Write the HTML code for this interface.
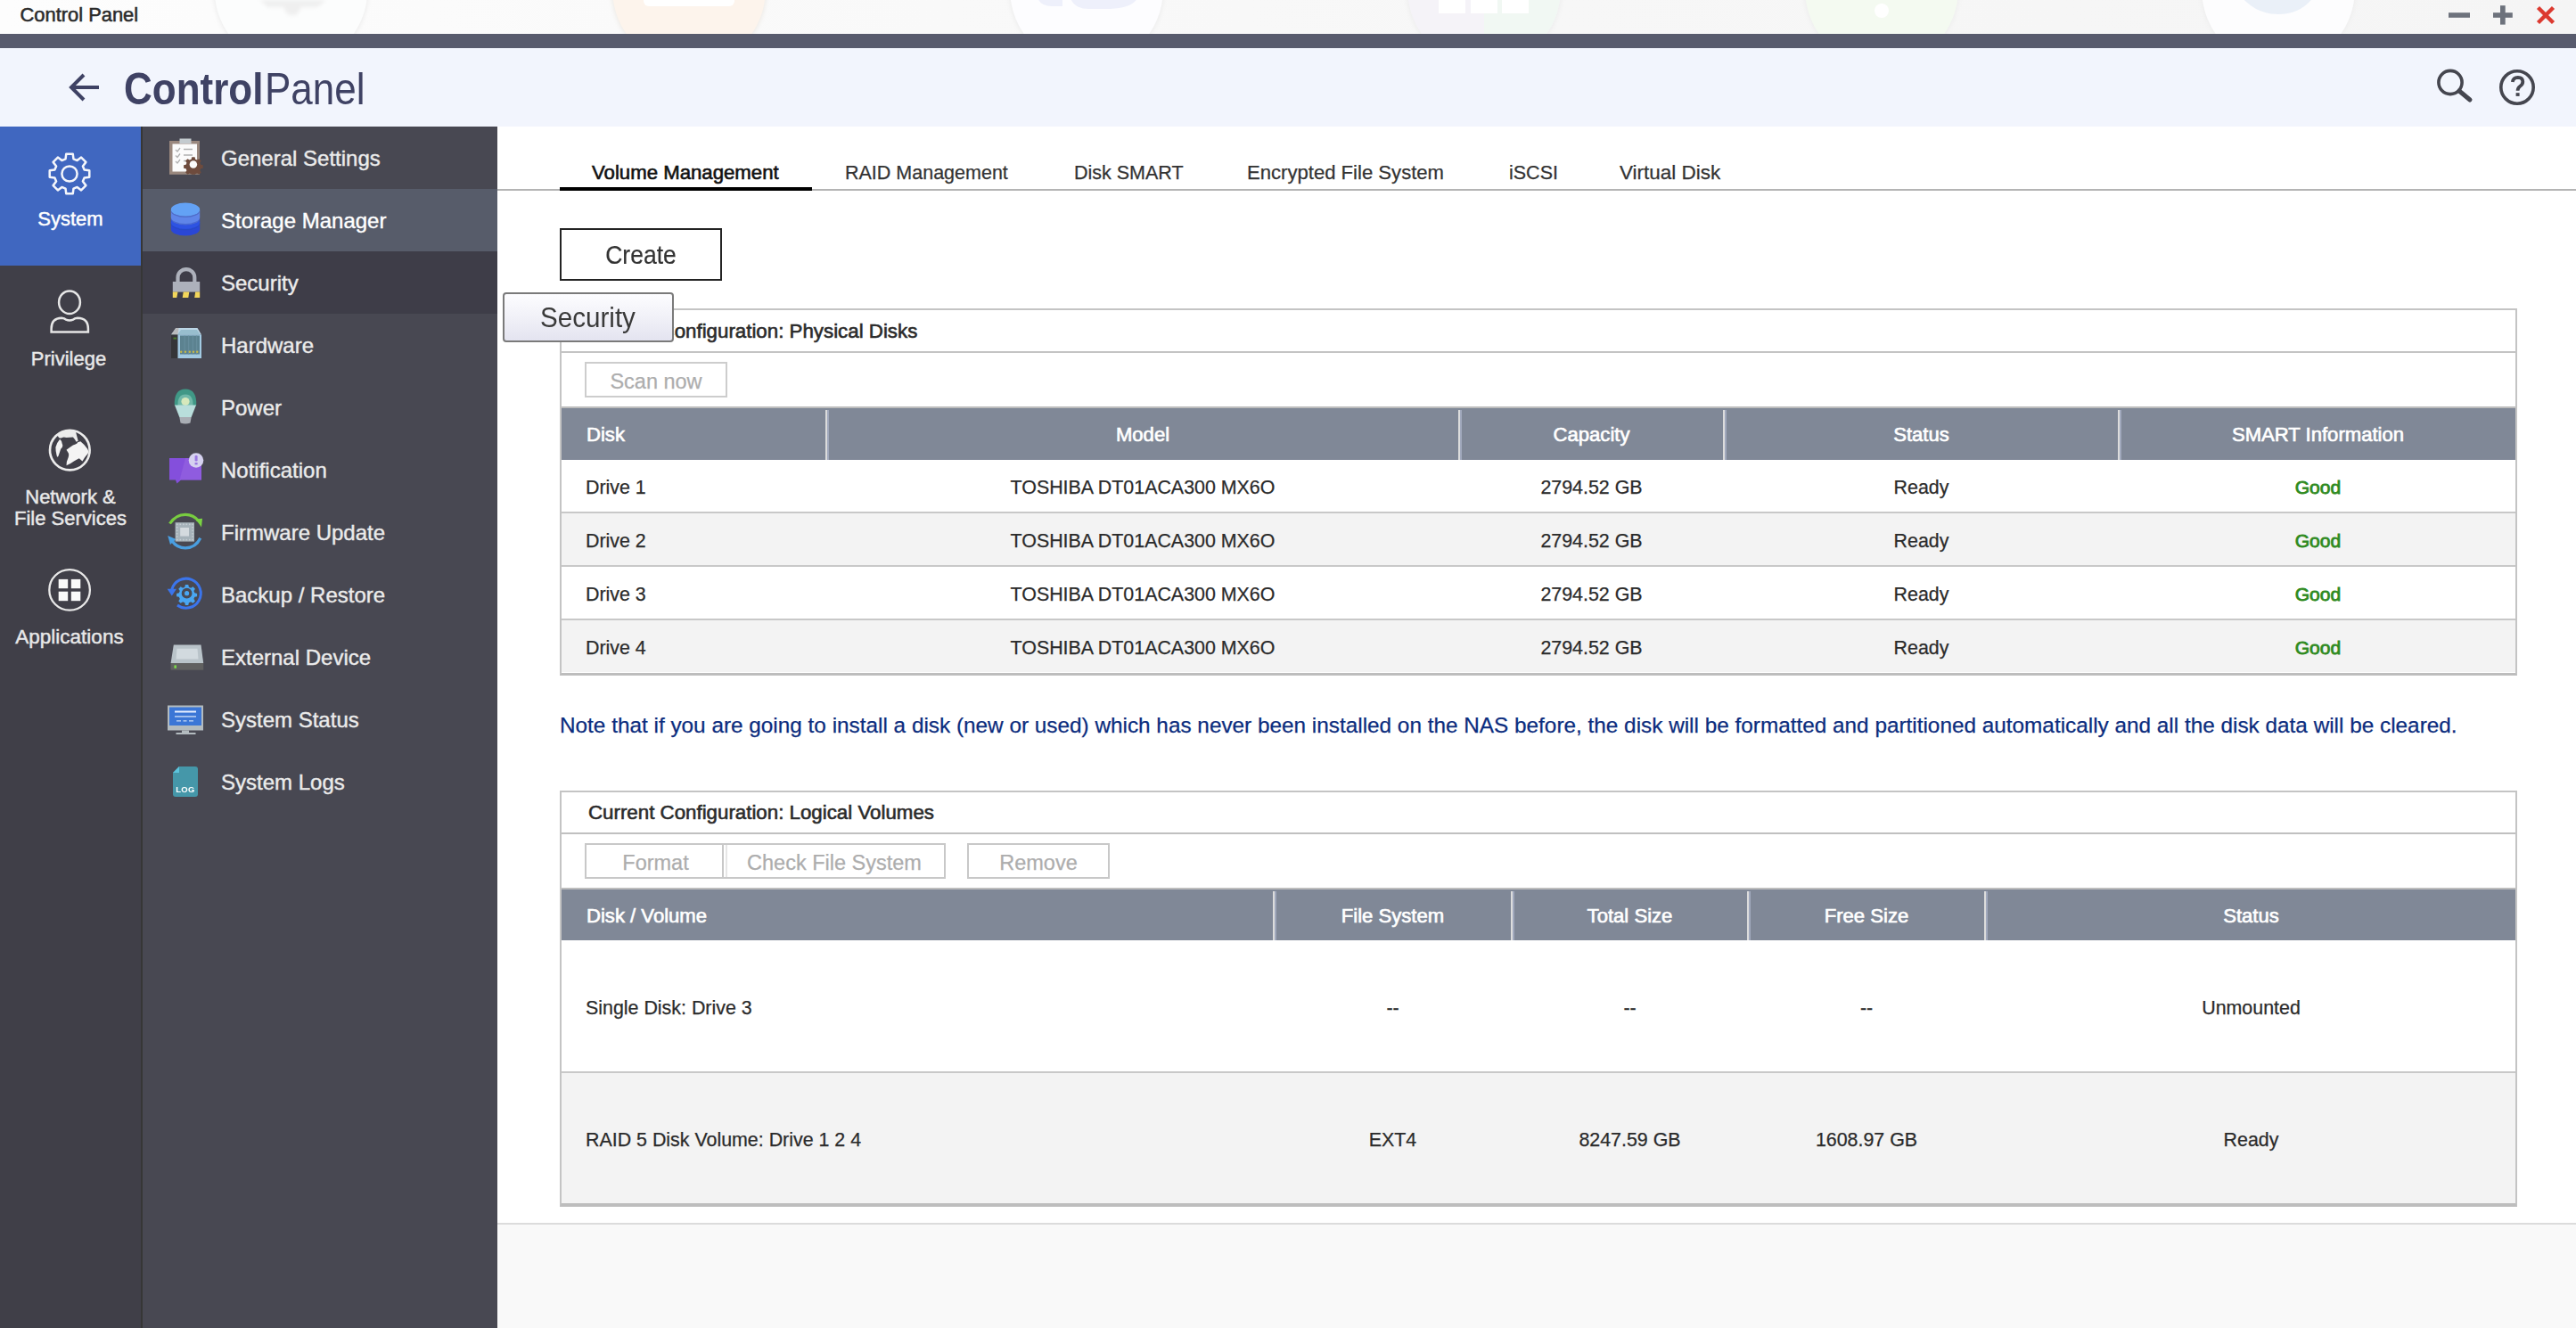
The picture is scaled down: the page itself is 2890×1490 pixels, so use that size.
<!DOCTYPE html>
<html><head><meta charset="utf-8">
<style>
*{box-sizing:border-box;margin:0;padding:0}
html,body{width:2890px;height:1490px;overflow:hidden;background:#fff;font-family:"Liberation Sans",sans-serif;position:relative}
.a{position:absolute}
.t{position:absolute;line-height:1;white-space:nowrap}
.c{text-align:center}
</style></head><body>

<!-- title bar -->
<div class="a" style="left:0;top:0;width:2890px;height:38px;background:linear-gradient(90deg,#fdfdfd 0%,#fafafa 25%,#f7f7f7 60%,#f5f5f5 100%);overflow:hidden" id="titlebar"></div>
<svg class="a" style="left:0;top:0" width="2890" height="38" viewBox="0 0 2890 38">
 <defs>
  <filter id="sh" x="-20%" y="-20%" width="140%" height="140%"><feGaussianBlur stdDeviation="2"/></filter>
 </defs>
 <g>
  <circle cx="326.5" cy="-11" r="87.5" fill="#efefef" filter="url(#sh)"/>
  <circle cx="326.5" cy="-11" r="85.7" fill="#fcfdfd"/>
  <path d="M292 0 L300 8 L318 8 L323 17 L333 17 L338 8 L356 8 L366 0 Z" fill="#efefef" filter="url(#sh)"/>
  <circle cx="773" cy="-11" r="87.5" fill="#f0ede9" filter="url(#sh)"/>
  <circle cx="773" cy="-11" r="85.7" fill="#fdf4ec"/>
  <rect x="722" y="-10" width="102" height="17" rx="6" fill="#ffffff"/>
  <circle cx="1219" cy="-11" r="87.5" fill="#efefef" filter="url(#sh)"/>
  <circle cx="1219" cy="-11" r="85.7" fill="#fdfdff"/>
  <path d="M1163 -10 Q1163 7 1180 7 H1192 V-10 Z M1200 -10 Q1200 10 1222 10 H1240 Q1278 10 1278 -10 Z" fill="#eef0fb"/>
  <circle cx="1665" cy="-11" r="87.5" fill="#efefef" filter="url(#sh)"/>
  <circle cx="1665" cy="-11" r="85.7" fill="#f5f3f8"/>
  <path d="M1665 74.7 A85.7 85.7 0 0 0 1750.7 -11 H1665 Z" fill="#f1f8f3"/>
  <rect x="1614" y="-10" width="30" height="25" fill="#fff"/>
  <rect x="1650" y="-10" width="30" height="25" fill="#fff"/>
  <rect x="1685" y="-10" width="30" height="25" fill="#fff"/>
  <circle cx="2111" cy="-11" r="87.5" fill="#efefef" filter="url(#sh)"/>
  <circle cx="2111" cy="-11" r="85.7" fill="#f4faf1"/>
  <circle cx="2111" cy="12" r="8" fill="#ffffff"/>
  <circle cx="2556" cy="-11" r="87.5" fill="#efefef" filter="url(#sh)"/>
  <circle cx="2556" cy="-11" r="85.7" fill="#fdfdfe"/>
  <path d="M2507 -10 L2520 2 Q2535 16 2556 16 Q2585 16 2600 -10 Z" fill="#eaf0f8"/>
 </g>
 <g fill="#6d727c">
  <rect x="2747" y="14.2" width="24" height="5.6"/>
  <rect x="2797" y="14.2" width="21.8" height="5.6"/>
  <rect x="2805" y="6.2" width="5.7" height="21.4"/>
 </g>
 <path d="M2847.5 8.5 L2864.5 25.5 M2864.5 8.5 L2847.5 25.5" stroke="#dc3a30" stroke-width="4.4"/>
</svg>
<div class="t" style="left:22.5px;top:5.5px;font-size:21.9px;color:#2b2b2b;-webkit-text-stroke:0.55px currentColor">Control Panel</div>

<!-- dark band -->
<div class="a" style="left:0;top:38px;width:2890px;height:16px;background:#585b6d"></div>

<!-- header -->
<div class="a" style="left:0;top:54px;width:2890px;height:88px;background:#f2f5fd"></div>

<!-- left sidebar -->
<div class="a" style="left:0;top:142px;width:158px;height:1348px;background:#403f48"></div>
<div class="a" style="left:0;top:142px;width:158px;height:156px;background:#4067c0"></div>
<div class="a" style="left:158px;top:142px;width:2px;height:1348px;background:#363636"></div>

<!-- second sidebar -->
<div class="a" style="left:160px;top:142px;width:398px;height:1348px;background:#484852"></div>
<div class="a" style="left:160px;top:212px;width:398px;height:70px;background:#575c6a"></div>
<div class="a" style="left:160px;top:282px;width:398px;height:70px;background:#3e3d48"></div>

<!-- header content -->
<svg class="a" style="left:74px;top:78px" width="42" height="40" viewBox="0 0 42 40">
 <path d="M37 20 H7 M20 6 L6 20 L20 34" fill="none" stroke="#3f4264" stroke-width="4" stroke-linecap="butt" stroke-linejoin="miter"/>
</svg>
<div class="t" style="left:139px;top:79.5px;font-size:44px;font-weight:bold;color:#3f4264;transform:scaleY(1.14);transform-origin:0 37px">Control</div>
<div class="t" style="left:297px;top:79.5px;font-size:44px;color:#3f4264;transform:scaleY(1.14);transform-origin:0 37px">Panel</div>
<svg class="a" style="left:2728px;top:74px" width="50" height="46" viewBox="0 0 50 46">
 <circle cx="21" cy="18.5" r="13.1" fill="none" stroke="#45464f" stroke-width="3.6"/>
 <path d="M31 28 L43 38" stroke="#45464f" stroke-width="5" stroke-linecap="round"/>
</svg>
<svg class="a" style="left:2800px;top:74px" width="48" height="48" viewBox="0 0 48 48">
 <circle cx="24" cy="24" r="18.2" fill="none" stroke="#45464f" stroke-width="3.6"/>
 <path d="M18.8 18 Q19.5 12.8 24.8 12.8 Q30.3 13 30.3 17.8 Q30.3 20.8 27 23 Q24.6 24.8 24.6 27.8" fill="none" stroke="#45464f" stroke-width="3.8"/>
 <rect x="22.6" y="30.2" width="4" height="3.7" fill="#45464f"/>
</svg>

<!-- left sidebar content -->
<svg class="a" style="left:54px;top:171px" width="48" height="48" viewBox="0 0 48 48">
 <g fill="none" stroke="#f4f6fb" stroke-width="2.5" stroke-linejoin="round">
 <path d="M19.55 7.39 L20.27 1.71 L27.73 1.71 L28.45 7.39 L32.60 9.10 L37.12 5.60 L42.40 10.88 L38.90 15.40 L40.61 19.55 L46.29 20.27 L46.29 27.73 L40.61 28.45 L38.90 32.60 L42.40 37.12 L37.12 42.40 L32.60 38.90 L28.45 40.61 L27.73 46.29 L20.27 46.29 L19.55 40.61 L15.40 38.90 L10.88 42.40 L5.60 37.12 L9.10 32.60 L7.39 28.45 L1.71 27.73 L1.71 20.27 L7.39 19.55 L9.10 15.40 L5.60 10.88 L10.88 5.60 L15.40 9.10 Z"/>
 <circle cx="24" cy="24" r="8.6"/>
 </g>
</svg>
<div class="t c" style="-webkit-text-stroke:0.45px currentColor;left:0;top:235px;width:158px;font-size:22px;color:#fff">System</div>

<svg class="a" style="left:54px;top:322px" width="50" height="56" viewBox="0 0 50 56">
 <g fill="none" stroke="#e6e6e6" stroke-width="2.5">
 <ellipse cx="24" cy="17.2" rx="11.9" ry="12.8"/>
 <path d="M3.6 50.6 V47 Q3.6 35 15 34.8 Q18.5 35 20 36.6 Q24 38.2 28 36.6 Q29.5 35 33 34.8 Q44.9 35 44.9 47 V50.6 Z"/>
 </g>
</svg>
<div class="t c" style="-webkit-text-stroke:0.45px currentColor;left:-2px;top:391.5px;width:158px;font-size:22px;color:#e8e8e8">Privilege</div>

<svg class="a" style="left:45px;top:470px" width="70" height="70" viewBox="0 0 1328 1328">
 <circle cx="632" cy="665" r="423" fill="none" stroke="#ececec" stroke-width="50"/>
 <path d="M360 340 Q480 250 640 235 Q720 240 760 280 L810 470 L770 490 Q740 430 700 390 L560 400 Q500 380 470 400 Q430 420 400 400 Z" fill="#ececec"/>
 <path d="M420 430 Q470 470 470 530 Q500 590 440 640 Q420 700 400 760 Q380 830 360 800 Q330 700 330 600 Q360 500 420 430 Z" fill="#f2f2f2"/>
 <path d="M560 660 Q640 600 700 560 Q790 540 800 500 L860 480 Q960 560 1010 640 Q1050 720 1000 760 Q960 800 900 900 Q850 860 830 840 Q780 870 720 900 Q640 960 560 990 Q560 900 600 820 Q620 760 600 720 Z" fill="#f4f4f4"/>
</svg>
<div class="t c" style="-webkit-text-stroke:0.45px currentColor;left:0;top:546.8px;width:158px;font-size:22px;color:#e8e8e8">Network &amp;</div>
<div class="t c" style="-webkit-text-stroke:0.45px currentColor;left:0;top:571px;width:158px;font-size:22px;color:#e8e8e8">File Services</div>

<svg class="a" style="left:53px;top:637px" width="50" height="50" viewBox="0 0 50 50">
 <circle cx="25.1" cy="24.9" r="22.8" fill="none" stroke="#e8e8e8" stroke-width="2.3"/>
 <rect x="12.7" y="12.9" width="10.5" height="10.3" fill="#fafafa"/>
 <rect x="26.8" y="12.9" width="10.5" height="10.3" fill="#fafafa"/>
 <rect x="12.7" y="26.7" width="10.5" height="10.5" fill="#fafafa"/>
 <rect x="26.8" y="26.7" width="10.5" height="10.5" fill="#fafafa"/>
</svg>
<div class="t c" style="-webkit-text-stroke:0.45px currentColor;left:-1px;top:703.5px;width:158px;font-size:22.5px;color:#e8e8e8">Applications</div>

<!-- second sidebar text -->
<div class="t" style="-webkit-text-stroke:0.4px currentColor;left:248px;top:165.7px;font-size:24px;color:#ebebeb">General Settings</div>
<div class="t" style="-webkit-text-stroke:0.4px currentColor;left:248px;top:235.7px;font-size:24px;color:#ffffff">Storage Manager</div>
<div class="t" style="-webkit-text-stroke:0.4px currentColor;left:248px;top:305.7px;font-size:24px;color:#ebebeb">Security</div>
<div class="t" style="-webkit-text-stroke:0.4px currentColor;left:248px;top:375.7px;font-size:24px;color:#ebebeb">Hardware</div>
<div class="t" style="-webkit-text-stroke:0.4px currentColor;left:248px;top:445.7px;font-size:24px;color:#ebebeb">Power</div>
<div class="t" style="-webkit-text-stroke:0.4px currentColor;left:248px;top:515.7px;font-size:24px;color:#ebebeb">Notification</div>
<div class="t" style="-webkit-text-stroke:0.4px currentColor;left:248px;top:585.7px;font-size:24px;color:#ebebeb">Firmware Update</div>
<div class="t" style="-webkit-text-stroke:0.4px currentColor;left:248px;top:655.7px;font-size:24px;color:#ebebeb">Backup / Restore</div>
<div class="t" style="-webkit-text-stroke:0.4px currentColor;left:248px;top:725.7px;font-size:24px;color:#ebebeb">External Device</div>
<div class="t" style="-webkit-text-stroke:0.4px currentColor;left:248px;top:795.7px;font-size:24px;color:#ebebeb">System Status</div>
<div class="t" style="-webkit-text-stroke:0.4px currentColor;left:248px;top:865.7px;font-size:24px;color:#ebebeb">System Logs</div>

<svg class="a" style="left:0;top:0" width="560" height="950" viewBox="0 0 560 950"><defs><filter id="ib" x="-5%" y="-5%" width="110%" height="110%"><feGaussianBlur stdDeviation="0.45"/></filter></defs><g filter="url(#ib)">
 <!-- General Settings clipboard -->
 <rect x="190" y="158" width="34" height="37.8" fill="#9a887e"/>
 <rect x="193.5" y="161.5" width="27.5" height="31" fill="#fbfbfb"/>
 <rect x="201.5" y="155.5" width="13" height="5.5" fill="#c4cbcf"/>
 <g stroke="#b0b0b0" stroke-width="1.3" fill="none">
  <path d="M197 168 l2 2 l3 -4 M197 174.5 l2 2 l3 -4 M197 181 l2 2 l3 -4"/>
  <path d="M206 167.5 h10 M206 174 h10 M206 180.5 h5"/>
 </g>
 <clipPath id="gsclip"><rect x="180" y="150" width="48" height="45.8"/></clipPath><g clip-path="url(#gsclip)"><g transform="translate(216.9 184.6) scale(0.76)">
  <path d="M-2.2 -11 h4.4 l0.8 3.3 l2.6 1.1 l2.9 -1.8 l3.1 3.1 l-1.8 2.9 l1.1 2.6 l3.3 0.8 v4.4 l-3.3 0.8 l-1.1 2.6 l1.8 2.9 l-3.1 3.1 l-2.9 -1.8 l-2.6 1.1 l-0.8 3.3 h-4.4 l-0.8 -3.3 l-2.6 -1.1 l-2.9 1.8 l-3.1 -3.1 l1.8 -2.9 l-1.1 -2.6 l-3.3 -0.8 v-4.4 l3.3 -0.8 l1.1 -2.6 l-1.8 -2.9 l3.1 -3.1 l2.9 1.8 l2.6 -1.1 Z" fill="#6e4c3c"/>
  <circle r="5.6" fill="#fbfbfb"/>
 </g></g>
 <!-- Storage Manager -->
 <ellipse cx="208" cy="257" rx="16.2" ry="7.5" fill="#2b47d6"/>
 <rect x="191.8" y="246" width="32.4" height="11" fill="#2b47d6"/>
 <ellipse cx="208" cy="251" rx="16.2" ry="7.5" fill="#2848c8"/>
 <ellipse cx="208" cy="249.5" rx="16.2" ry="7.5" fill="#2d52e2"/>
 <ellipse cx="208" cy="245" rx="16.2" ry="7.5" fill="#4a6ad0"/>
 <ellipse cx="208" cy="243.5" rx="16.2" ry="7.5" fill="#5f85e8"/>
 <rect x="191.8" y="236" width="32.4" height="7.5" fill="#5f85e8"/>
 <ellipse cx="208" cy="236.5" rx="16.2" ry="7.5" fill="#4f6cc8"/>
 <ellipse cx="208" cy="235" rx="16.2" ry="7.5" fill="#64a2f5"/>
 <!-- Security lock -->
 <path d="M199.5 318 V311.5 A9.4 9.4 0 0 1 218.3 311.5 V318" fill="none" stroke="#adb1bb" stroke-width="4.2"/>
 <rect x="193.8" y="316" width="30.4" height="11.6" fill="#adb1bb"/>
 <path d="M193.8 327.6 H199.5 L198.3 334 H193.8 Z M205.7 327.6 H212.3 L211.3 334 H204.7 Z M219.2 327.6 H224.2 V334 H218.2 Z" fill="#f2d65a"/>
 <!-- Hardware NAS -->
 <path d="M192 375.5 L197.3 368 H221.5 L226 375.5 Z" fill="#bcd6e6"/>
 <path d="M199 375.5 L203 370 H221 L224.5 375.5 Z" fill="#98bece"/>
 <path d="M192 375.5 L197.3 368 H200.5 L199.5 375.5 Z" fill="#b9babc"/>
 <rect x="192" y="375.5" width="7.5" height="26.5" fill="#343638"/>
 <rect x="194.5" y="378.6" width="3.6" height="2" fill="#4d7a2c"/>
 <rect x="199.5" y="375.5" width="26.5" height="26.5" fill="#a2cae2"/>
 <rect x="202" y="376.5" width="22" height="21" fill="#5b8290"/>
 <g fill="#6990a0"><rect x="206.6" y="376.5" width="1" height="21"/><rect x="211.2" y="376.5" width="1" height="21"/><rect x="215.8" y="376.5" width="1" height="21"/><rect x="220.2" y="376.5" width="1" height="21"/></g>
 <g fill="#c4b848"><circle cx="203.2" cy="394.8" r="1.2"/><circle cx="208" cy="394.8" r="1.2"/><circle cx="212.8" cy="394.8" r="1.2"/><circle cx="217" cy="394.8" r="1.2"/><circle cx="221.2" cy="394.8" r="1.2"/></g>
 <!-- Power bulb -->
 <path d="M195.8 455 Q195 436.5 208 436.5 Q221 436.5 220.2 455 Z" fill="#3f9886"/>
 <path d="M199.5 455 Q199 442.5 208 442.5 Q217 442.5 216.5 455 Z" fill="#6fb8a8"/>
 <circle cx="208" cy="450.5" r="4.6" fill="#d6e8bc"/>
 <path d="M196 454.5 H220 L214.7 468 H201.3 Z" fill="#b9dedc"/>
 <path d="M201.3 468 H214.7 L213.5 474.5 Q208 476.5 202.5 474.5 Z" fill="#a9adb4"/>
 <!-- Notification -->
 <path d="M190 514 H226 V538.5 H203 L198.5 542.5 L197 538.5 H190 Z" fill="#8450dc"/>
 <path d="M208 514 H226 V538.5 H201.5 Z" fill="#9460e0" opacity="0.7"/>
 <circle cx="220" cy="516.5" r="8.3" fill="#d6d2f0"/>
 <rect x="218.6" y="511" width="3" height="6.5" rx="1.2" fill="#9a78e0"/>
 <rect x="218.6" y="519" width="3" height="2.4" fill="#9a78e0"/>
 <!-- Firmware Update -->
 <path d="M190.5 587.5 Q197 577.3 208 577.3 Q217.5 577.3 222.5 584.5" fill="none" stroke="#78cc40" stroke-width="3.2"/>
 <path d="M219.5 582.5 L227 581.8 L226 591.5 Z" fill="#7ad442"/>
 <path d="M224.8 603.8 Q219.5 614.8 208 614.8 Q198.5 614.8 193.5 607.5" fill="none" stroke="#4a9ee0" stroke-width="3.2"/>
 <path d="M188.2 601 L197.5 605 L191 611 Z" fill="#4aa0e4"/>
 <rect x="196.6" y="586.2" width="21.4" height="21.4" fill="#a6b2ba"/>
 <g fill="#c4ccd2"><rect x="198" y="587.5" width="1.6" height="1.6"/><rect x="201.5" y="587.5" width="1.6" height="1.6"/><rect x="205" y="587.5" width="1.6" height="1.6"/><rect x="208.5" y="587.5" width="1.6" height="1.6"/><rect x="212" y="587.5" width="1.6" height="1.6"/><rect x="215.2" y="587.5" width="1.6" height="1.6"/>
 <rect x="198" y="604.8" width="1.6" height="1.6"/><rect x="201.5" y="604.8" width="1.6" height="1.6"/><rect x="205" y="604.8" width="1.6" height="1.6"/><rect x="208.5" y="604.8" width="1.6" height="1.6"/><rect x="212" y="604.8" width="1.6" height="1.6"/><rect x="215.2" y="604.8" width="1.6" height="1.6"/>
 <rect x="197.8" y="591" width="1.6" height="1.6"/><rect x="197.8" y="594.5" width="1.6" height="1.6"/><rect x="197.8" y="598" width="1.6" height="1.6"/><rect x="197.8" y="601.3" width="1.6" height="1.6"/>
 <rect x="215.2" y="591" width="1.6" height="1.6"/><rect x="215.2" y="594.5" width="1.6" height="1.6"/><rect x="215.2" y="598" width="1.6" height="1.6"/><rect x="215.2" y="601.3" width="1.6" height="1.6"/></g>
 <rect x="202.2" y="592" width="9.8" height="9.6" fill="#d4dadf"/>
 <!-- Backup / Restore -->
 <path d="M192.8 661.5 A16.5 16.5 0 1 1 199 679" fill="none" stroke="#3b74ec" stroke-width="3"/>
 <path d="M187.6 660.8 L198 660.8 L192.8 668.6 Z" fill="#3b74ec"/>
 <g transform="translate(209.6 665.7) scale(0.92)">
  <path d="M-1.8 -10.5 h3.6 l0.7 3 l2.4 1 l2.6 -1.6 l2.6 2.6 l-1.6 2.6 l1 2.4 l3 0.7 v3.6 l-3 0.7 l-1 2.4 l1.6 2.6 l-2.6 2.6 l-2.6 -1.6 l-2.4 1 l-0.7 3 h-3.6 l-0.7 -3 l-2.4 -1 l-2.6 1.6 l-2.6 -2.6 l1.6 -2.6 l-1 -2.4 l-3 -0.7 v-3.6 l3 -0.7 l1 -2.4 l-1.6 -2.6 l2.6 -2.6 l2.6 1.6 l2.4 -1 Z" fill="#4aa6f2"/>
  <circle r="6.4" fill="#484852"/>
  <circle r="2.8" fill="#4aa6f2"/>
 </g>
 <!-- External Device -->
 <path d="M194.8 723.6 H225.5 L228.2 744 H191.6 Z" fill="#b9c3c9"/>
 <path d="M198.4 727.7 H221.5 L222.5 739.5 H197.6 Z" fill="#d2dadf"/>
 <rect x="191.6" y="744" width="36.6" height="7.7" fill="#606060"/>
 <rect x="195.4" y="746.4" width="2.6" height="3.4" fill="#7ad84a"/>
 <!-- System Status -->
 <rect x="188" y="791.5" width="40" height="28" fill="#b3bbbf"/>
 <rect x="190" y="793.5" width="36" height="20.5" fill="#3b76d6"/>
 <rect x="196" y="797.5" width="24" height="2" fill="#e8f0ff"/>
 <rect x="196" y="803" width="24" height="1.8" fill="#a9c4ee"/>
 <g fill="#a9c4ee"><rect x="198" y="808" width="5" height="1.6"/><rect x="205.5" y="808" width="4" height="1.6"/><rect x="212" y="808" width="5" height="1.6"/></g>
 <rect x="204" y="819.5" width="8" height="3" fill="#b3bbbf"/>
 <rect x="197.5" y="822" width="22" height="2" fill="#b3bbbf"/>
 <!-- System Logs -->
 <path d="M201 860 H219 Q222 860 222 863 V891 Q222 894 219 894 H197 Q194 894 194 891 V867 Z" fill="#4497a9"/>
 <path d="M201 860 V867 H194 Z" fill="#5cc4dc"/>
 <text x="208" y="888.5" text-anchor="middle" font-family="Liberation Sans" font-weight="bold" font-size="9.5" fill="#fff" letter-spacing="0.3">LOG</text>
</g></svg>


<!-- CONTENT -->
<div class="a" style="left:558px;top:212px;width:2332px;height:2px;background:#b4b4b4"></div>
<div class="a" style="left:628px;top:210px;width:283px;height:4px;background:#000"></div>
<div class="t" style="left:664px;top:183.0px;font-size:22.2px;color:#111;-webkit-text-stroke:0.6px currentColor">Volume Management</div>
<div class="t" style="-webkit-text-stroke:0.25px currentColor;left:948px;top:183.6px;font-size:21.5px;color:#333">RAID Management</div>
<div class="t" style="-webkit-text-stroke:0.25px currentColor;left:1205px;top:183.6px;font-size:21.5px;color:#333">Disk SMART</div>
<div class="t" style="-webkit-text-stroke:0.25px currentColor;left:1399px;top:183.1px;font-size:22.1px;color:#333">Encrypted File System</div>
<div class="t" style="-webkit-text-stroke:0.25px currentColor;left:1693px;top:183.6px;font-size:21.5px;color:#333">iSCSI</div>
<div class="t" style="-webkit-text-stroke:0.25px currentColor;left:1817px;top:182.8px;font-size:22.5px;color:#333">Virtual Disk</div>
<div class="a" style="left:628px;top:256px;width:182px;height:59px;border:2px solid #232323"></div>
<div class="t" style="left:628px;top:273.6px;font-size:26.5px;color:#333;width:182px;text-align:center;transform:scaleY(1.13);transform-origin:0 22.4px;-webkit-text-stroke:0.2px currentColor">Create</div>
<div class="a" style="left:628px;top:346px;width:2196px;height:412px;border:2px solid #c4c4c4;border-bottom:3px solid #bdbdbd"></div>
<div class="t" style="left:660px;top:361.1px;font-size:22.3px;color:#2b2b2b;-webkit-text-stroke:0.6px currentColor">Current Configuration: Physical Disks</div>
<div class="a" style="left:630px;top:394px;width:2192px;height:2px;background:#c4c4c4"></div>
<div class="a" style="left:656px;top:406px;width:160px;height:40px;border:2px solid #cdcdcd"></div>
<div class="t" style="-webkit-text-stroke:0.25px currentColor;left:656px;top:416.9px;font-size:23.5px;color:#adadad;width:160px;text-align:center">Scan now</div>
<div class="a" style="left:630px;top:456px;width:2192px;height:2px;background:#bdbdbd"></div>
<div class="a" style="left:630px;top:458px;width:2192px;height:58px;background:#808897"></div>
<div class="a" style="left:926px;top:460px;width:2px;height:56px;background:#dcdcdc"></div><div class="a" style="left:928px;top:460px;width:2px;height:56px;background:#a1a9bd"></div>
<div class="a" style="left:1636px;top:460px;width:2px;height:56px;background:#dcdcdc"></div><div class="a" style="left:1638px;top:460px;width:2px;height:56px;background:#a1a9bd"></div>
<div class="a" style="left:1933px;top:460px;width:2px;height:56px;background:#dcdcdc"></div><div class="a" style="left:1935px;top:460px;width:2px;height:56px;background:#a1a9bd"></div>
<div class="a" style="left:2376px;top:460px;width:2px;height:56px;background:#dcdcdc"></div><div class="a" style="left:2378px;top:460px;width:2px;height:56px;background:#a1a9bd"></div>
<div class="t" style="left:658px;top:477.2px;font-size:22.1px;color:#fff;-webkit-text-stroke:0.65px currentColor">Disk</div>
<div class="t" style="left:927px;top:477.2px;font-size:22.1px;color:#fff;-webkit-text-stroke:0.65px currentColor;width:710px;text-align:center">Model</div>
<div class="t" style="left:1637px;top:477.2px;font-size:22.1px;color:#fff;-webkit-text-stroke:0.65px currentColor;width:297px;text-align:center">Capacity</div>
<div class="t" style="left:1934px;top:477.2px;font-size:22.1px;color:#fff;-webkit-text-stroke:0.65px currentColor;width:443px;text-align:center">Status</div>
<div class="t" style="left:2377px;top:477.2px;font-size:22.1px;color:#fff;-webkit-text-stroke:0.65px currentColor;width:447px;text-align:center">SMART Information</div>
<div class="a" style="left:630px;top:516px;width:2192px;height:58px;background:#fff"></div>
<div class="a" style="left:630px;top:574px;width:2192px;height:2px;background:#c8c8c8"></div>
<div class="t" style="-webkit-text-stroke:0.25px currentColor;left:657px;top:536.7px;font-size:21.4px;color:#2b2b2b">Drive 1</div>
<div class="t" style="-webkit-text-stroke:0.25px currentColor;left:927px;top:536.7px;font-size:21.4px;color:#2b2b2b;width:710px;text-align:center">TOSHIBA DT01ACA300 MX6O</div>
<div class="t" style="-webkit-text-stroke:0.25px currentColor;left:1637px;top:536.7px;font-size:21.4px;color:#2b2b2b;width:297px;text-align:center">2794.52 GB</div>
<div class="t" style="-webkit-text-stroke:0.25px currentColor;left:1934px;top:536.7px;font-size:21.4px;color:#2b2b2b;width:443px;text-align:center">Ready</div>
<div class="t" style="left:2377px;top:535.9px;font-size:21.1px;color:#2e8a1e;-webkit-text-stroke:0.8px currentColor;width:447px;text-align:center">Good</div>
<div class="a" style="left:630px;top:576px;width:2192px;height:58px;background:#f3f3f3"></div>
<div class="a" style="left:630px;top:634px;width:2192px;height:2px;background:#c8c8c8"></div>
<div class="t" style="-webkit-text-stroke:0.25px currentColor;left:657px;top:596.7px;font-size:21.4px;color:#2b2b2b">Drive 2</div>
<div class="t" style="-webkit-text-stroke:0.25px currentColor;left:927px;top:596.7px;font-size:21.4px;color:#2b2b2b;width:710px;text-align:center">TOSHIBA DT01ACA300 MX6O</div>
<div class="t" style="-webkit-text-stroke:0.25px currentColor;left:1637px;top:596.7px;font-size:21.4px;color:#2b2b2b;width:297px;text-align:center">2794.52 GB</div>
<div class="t" style="-webkit-text-stroke:0.25px currentColor;left:1934px;top:596.7px;font-size:21.4px;color:#2b2b2b;width:443px;text-align:center">Ready</div>
<div class="t" style="left:2377px;top:595.9px;font-size:21.1px;color:#2e8a1e;-webkit-text-stroke:0.8px currentColor;width:447px;text-align:center">Good</div>
<div class="a" style="left:630px;top:636px;width:2192px;height:58px;background:#fff"></div>
<div class="a" style="left:630px;top:694px;width:2192px;height:2px;background:#c8c8c8"></div>
<div class="t" style="-webkit-text-stroke:0.25px currentColor;left:657px;top:656.7px;font-size:21.4px;color:#2b2b2b">Drive 3</div>
<div class="t" style="-webkit-text-stroke:0.25px currentColor;left:927px;top:656.7px;font-size:21.4px;color:#2b2b2b;width:710px;text-align:center">TOSHIBA DT01ACA300 MX6O</div>
<div class="t" style="-webkit-text-stroke:0.25px currentColor;left:1637px;top:656.7px;font-size:21.4px;color:#2b2b2b;width:297px;text-align:center">2794.52 GB</div>
<div class="t" style="-webkit-text-stroke:0.25px currentColor;left:1934px;top:656.7px;font-size:21.4px;color:#2b2b2b;width:443px;text-align:center">Ready</div>
<div class="t" style="left:2377px;top:655.9px;font-size:21.1px;color:#2e8a1e;-webkit-text-stroke:0.8px currentColor;width:447px;text-align:center">Good</div>
<div class="a" style="left:630px;top:696px;width:2192px;height:58px;background:#f3f3f3"></div>
<div class="t" style="-webkit-text-stroke:0.25px currentColor;left:657px;top:716.7px;font-size:21.4px;color:#2b2b2b">Drive 4</div>
<div class="t" style="-webkit-text-stroke:0.25px currentColor;left:927px;top:716.7px;font-size:21.4px;color:#2b2b2b;width:710px;text-align:center">TOSHIBA DT01ACA300 MX6O</div>
<div class="t" style="-webkit-text-stroke:0.25px currentColor;left:1637px;top:716.7px;font-size:21.4px;color:#2b2b2b;width:297px;text-align:center">2794.52 GB</div>
<div class="t" style="-webkit-text-stroke:0.25px currentColor;left:1934px;top:716.7px;font-size:21.4px;color:#2b2b2b;width:443px;text-align:center">Ready</div>
<div class="t" style="left:2377px;top:715.9px;font-size:21.1px;color:#2e8a1e;-webkit-text-stroke:0.8px currentColor;width:447px;text-align:center">Good</div>
<div class="t" style="-webkit-text-stroke:0.25px currentColor;left:628px;top:801.7px;font-size:24.34px;color:#0c2d7e">Note that if you are going to install a disk (new or used) which has never been installed on the NAS before, the disk will be formatted and partitioned automatically and all the disk data will be cleared.</div>
<div class="a" style="left:628px;top:887px;width:2196px;height:467px;border:2px solid #c4c4c4;border-bottom:4px solid #bdbdbd"></div>
<div class="t" style="left:660px;top:901.1px;font-size:22.3px;color:#2b2b2b;-webkit-text-stroke:0.6px currentColor">Current Configuration: Logical Volumes</div>
<div class="a" style="left:630px;top:934px;width:2192px;height:2px;background:#c0c0c0"></div>
<div class="a" style="left:656px;top:946px;width:156px;height:40px;border:2px solid #c8c8c8"></div>
<div class="t" style="-webkit-text-stroke:0.25px currentColor;left:656px;top:956.9px;font-size:23.5px;color:#adadad;width:159px;text-align:center">Format</div>
<div class="a" style="left:812px;top:946px;width:249px;height:40px;border:2px solid #c8c8c8;border-left:none"></div><div class="a" style="left:814px;top:948px;width:2px;height:36px;background:#e6e6e6"></div>
<div class="t" style="-webkit-text-stroke:0.25px currentColor;left:811px;top:956.9px;font-size:23.5px;color:#adadad;width:250px;text-align:center">Check File System</div>
<div class="a" style="left:1085px;top:946px;width:160px;height:40px;border:2px solid #c8c8c8"></div>
<div class="t" style="-webkit-text-stroke:0.25px currentColor;left:1085px;top:956.9px;font-size:23.5px;color:#adadad;width:160px;text-align:center">Remove</div>
<div class="a" style="left:630px;top:996px;width:2192px;height:2px;background:#bdbdbd"></div>
<div class="a" style="left:630px;top:998px;width:2192px;height:57px;background:#808897"></div>
<div class="a" style="left:1428px;top:1000px;width:2px;height:55px;background:#dcdcdc"></div><div class="a" style="left:1430px;top:1000px;width:2px;height:55px;background:#a1a9bd"></div>
<div class="a" style="left:1695px;top:1000px;width:2px;height:55px;background:#dcdcdc"></div><div class="a" style="left:1697px;top:1000px;width:2px;height:55px;background:#a1a9bd"></div>
<div class="a" style="left:1960px;top:1000px;width:2px;height:55px;background:#dcdcdc"></div><div class="a" style="left:1962px;top:1000px;width:2px;height:55px;background:#a1a9bd"></div>
<div class="a" style="left:2226px;top:1000px;width:2px;height:55px;background:#dcdcdc"></div><div class="a" style="left:2228px;top:1000px;width:2px;height:55px;background:#a1a9bd"></div>
<div class="t" style="left:658px;top:1017.2px;font-size:22.1px;color:#fff;-webkit-text-stroke:0.65px currentColor">Disk / Volume</div>
<div class="t" style="left:1429px;top:1017.2px;font-size:22.1px;color:#fff;-webkit-text-stroke:0.65px currentColor;width:267px;text-align:center">File System</div>
<div class="t" style="left:1696px;top:1017.2px;font-size:22.1px;color:#fff;-webkit-text-stroke:0.65px currentColor;width:265px;text-align:center">Total Size</div>
<div class="t" style="left:1961px;top:1017.2px;font-size:22.1px;color:#fff;-webkit-text-stroke:0.65px currentColor;width:266px;text-align:center">Free Size</div>
<div class="t" style="left:2227px;top:1017.2px;font-size:22.1px;color:#fff;-webkit-text-stroke:0.65px currentColor;width:597px;text-align:center">Status</div>
<div class="a" style="left:630px;top:1055px;width:2192px;height:147px;background:#fff"></div>
<div class="a" style="left:630px;top:1202px;width:2192px;height:2px;background:#c8c8c8"></div>
<div class="a" style="left:630px;top:1204px;width:2192px;height:146px;background:#f3f3f3"></div>
<div class="t" style="-webkit-text-stroke:0.25px currentColor;left:657px;top:1121.0px;font-size:21.4px;color:#2b2b2b">Single Disk: Drive 3</div>
<div class="t" style="-webkit-text-stroke:0.25px currentColor;left:1429px;top:1121.0px;font-size:21.4px;color:#2b2b2b;width:267px;text-align:center">--</div>
<div class="t" style="-webkit-text-stroke:0.25px currentColor;left:1696px;top:1121.0px;font-size:21.4px;color:#2b2b2b;width:265px;text-align:center">--</div>
<div class="t" style="-webkit-text-stroke:0.25px currentColor;left:1961px;top:1121.0px;font-size:21.4px;color:#2b2b2b;width:266px;text-align:center">--</div>
<div class="t" style="-webkit-text-stroke:0.25px currentColor;left:2227px;top:1121.0px;font-size:21.4px;color:#2b2b2b;width:597px;text-align:center">Unmounted</div>
<div class="t" style="-webkit-text-stroke:0.25px currentColor;left:657px;top:1268.9px;font-size:21.4px;color:#2b2b2b">RAID 5 Disk Volume: Drive 1 2 4</div>
<div class="t" style="-webkit-text-stroke:0.25px currentColor;left:1429px;top:1268.9px;font-size:21.4px;color:#2b2b2b;width:267px;text-align:center">EXT4</div>
<div class="t" style="-webkit-text-stroke:0.25px currentColor;left:1696px;top:1268.9px;font-size:21.4px;color:#2b2b2b;width:265px;text-align:center">8247.59 GB</div>
<div class="t" style="-webkit-text-stroke:0.25px currentColor;left:1961px;top:1268.9px;font-size:21.4px;color:#2b2b2b;width:266px;text-align:center">1608.97 GB</div>
<div class="t" style="-webkit-text-stroke:0.25px currentColor;left:2227px;top:1268.9px;font-size:21.4px;color:#2b2b2b;width:597px;text-align:center">Ready</div>
<div class="a" style="left:564px;top:328px;width:192px;height:56px;border:2px solid #7a7a7a;border-radius:4px;background:linear-gradient(#fdfdff,#e4e4f0)"></div>
<div class="t" style="left:606px;top:342.4px;font-size:29.6px;color:#3a3a3a;transform:scaleY(1.08);transform-origin:0 25px">Security</div>

<!-- content bottom -->
<div class="a" style="left:558px;top:1372px;width:2332px;height:2px;background:#dcdcdc"></div>
<div class="a" style="left:558px;top:1374px;width:2332px;height:116px;background:#f9f9f9"></div>

</body></html>
